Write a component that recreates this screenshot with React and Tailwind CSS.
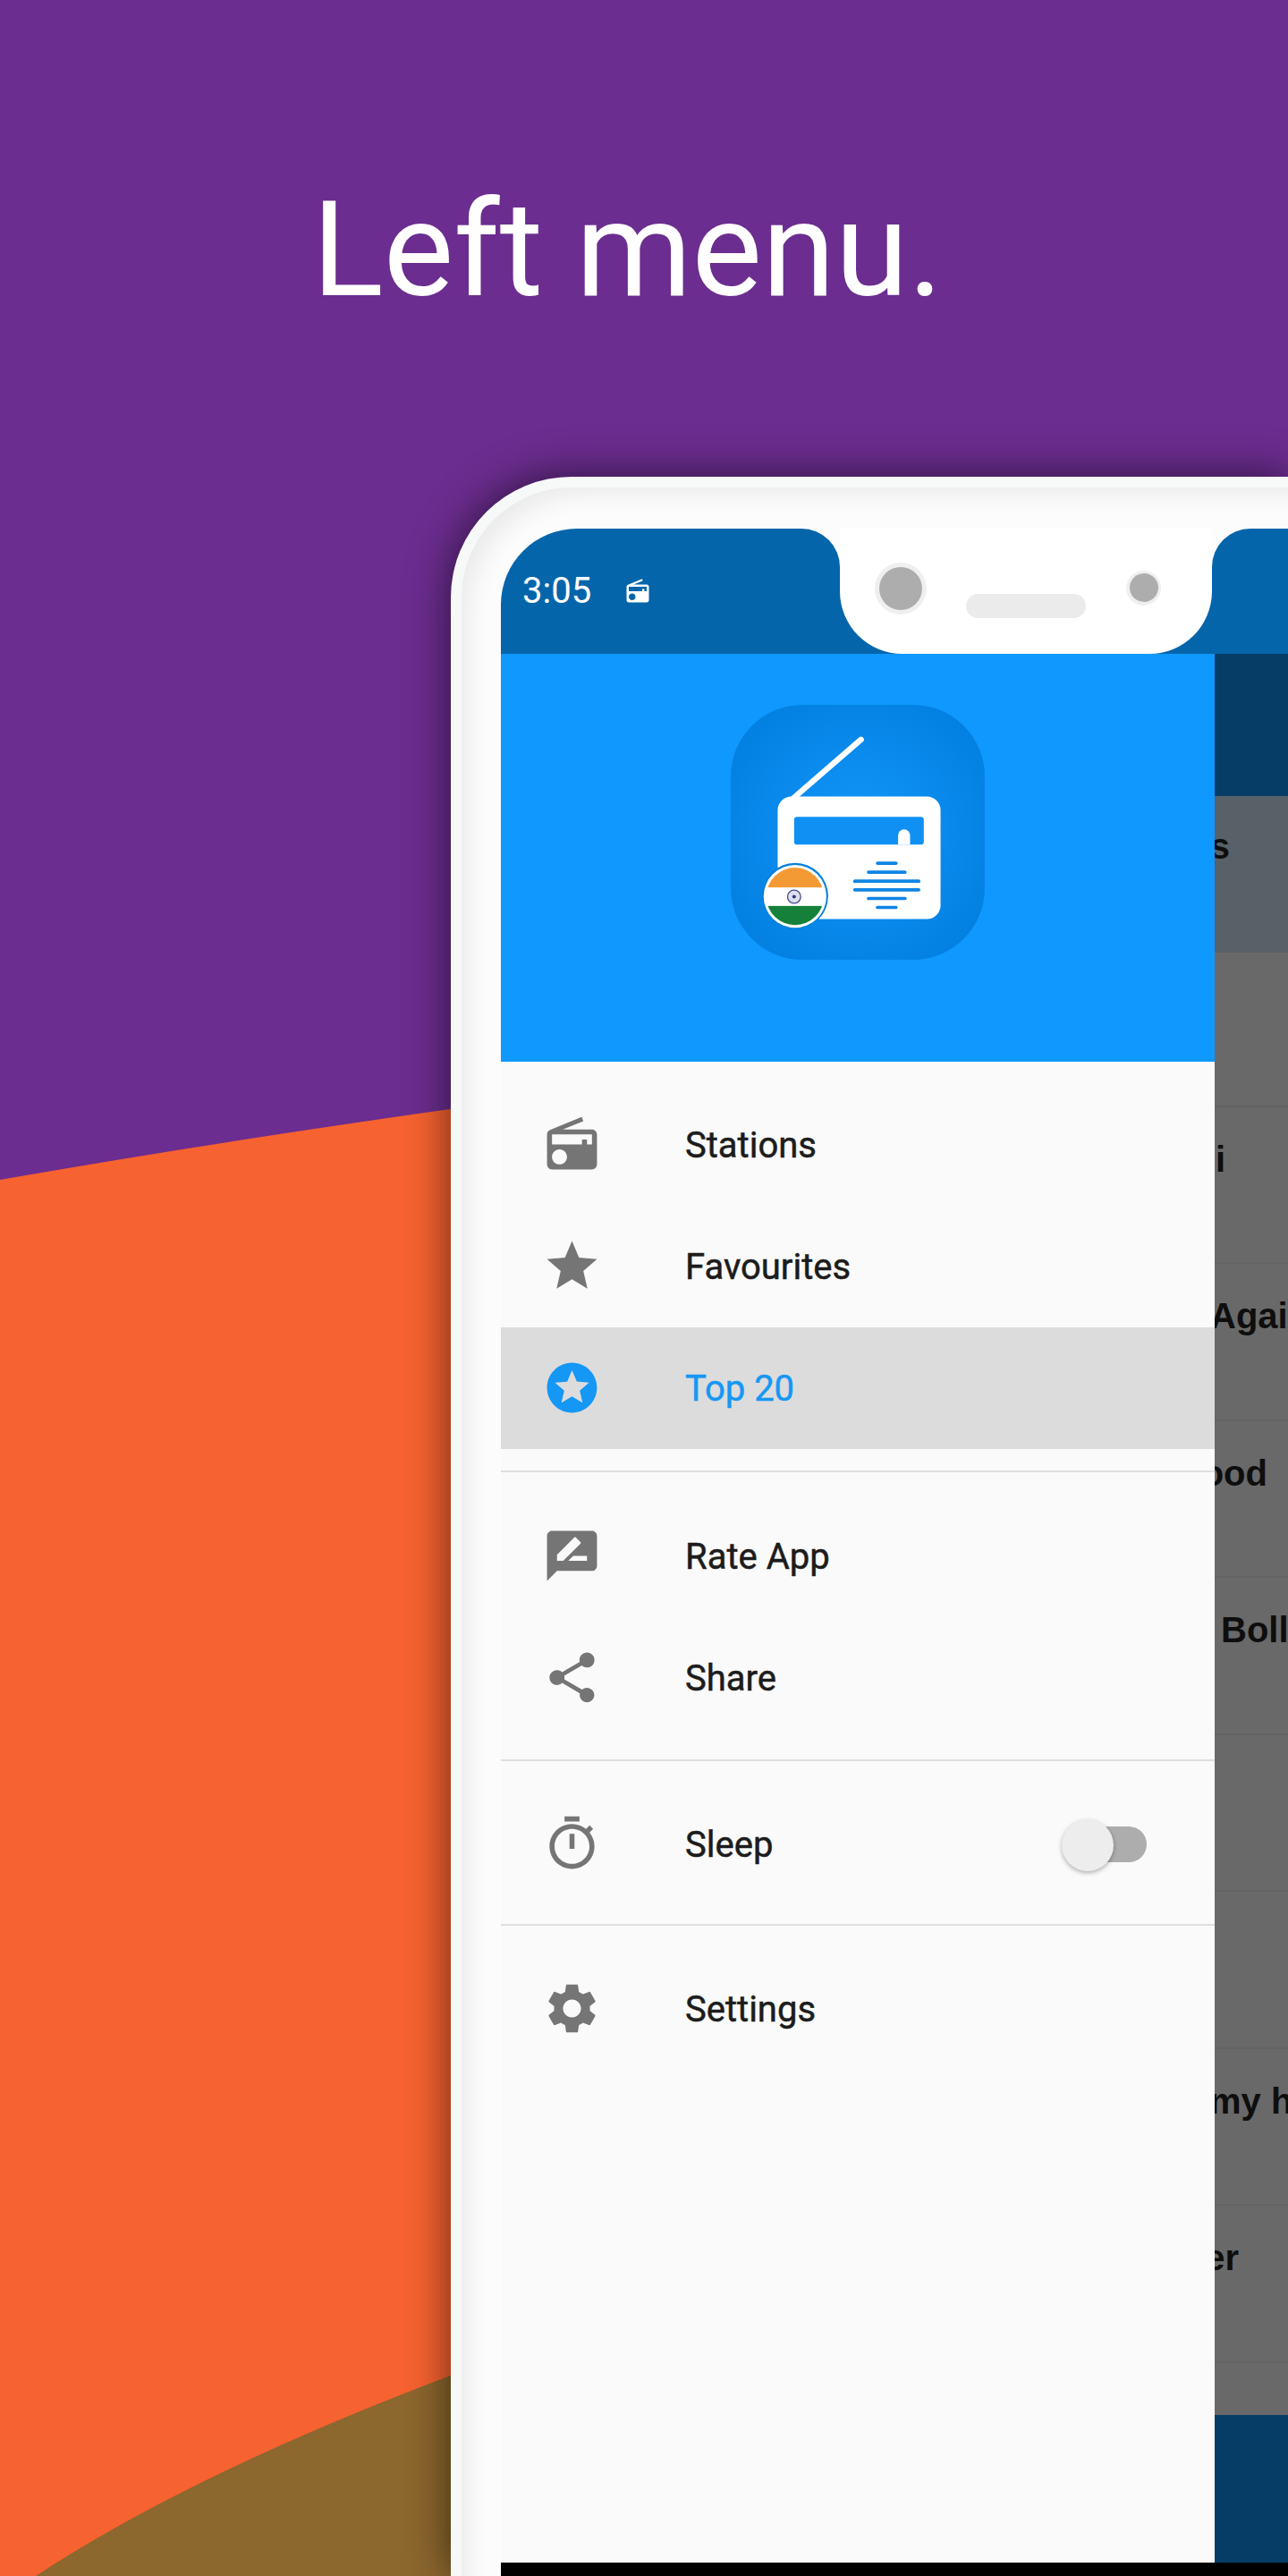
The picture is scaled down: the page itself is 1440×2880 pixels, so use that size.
import React from 'react';

const PATHS = {
  radio: 'M3.24 6.15C2.51 6.43 2 7.17 2 8v12c0 1.1.89 2 2 2h16c1.11 0 2-.9 2-2V8c0-1.11-.89-2-2-2H8.3l8.26-3.34L15.88 1 3.24 6.15zM7 20c-1.66 0-3-1.34-3-3s1.34-3 3-3 3 1.34 3 3-1.34 3-3 3zm13-8h-2v-2h-2v2H4V8h16v4z',
  star: 'M12 17.27L18.18 21l-1.64-7.03L22 9.24l-7.19-.61L12 2 9.19 8.63 2 9.24l5.46 4.73L5.82 21z',
  stars: 'M11.99 2C6.47 2 2 6.48 2 12s4.47 10 9.99 10C17.52 22 22 17.52 22 12S17.52 2 11.99 2zm4.24 16L12 15.45 7.77 18l1.12-4.81-3.73-3.23 4.92-.42L12 5l1.92 4.53 4.92.42-3.73 3.23L16.23 18z',
  rate: 'M20 2H4c-1.1 0-2 .9-2 2v18l4-4h14c1.1 0 2-.9 2-2V4c0-1.1-.9-2-2-2zM6 14v-2.47l6.88-6.88c.2-.2.51-.2.71 0l1.77 1.77c.2.2.2.51 0 .71L8.47 14H6zm12 0h-7.5l2-2H18v2z',
  share: 'M18 16.08c-.76 0-1.44.3-1.96.77L8.91 12.7c.05-.23.09-.46.09-.7s-.04-.47-.09-.7l7.05-4.11c.54.5 1.25.81 2.04.81 1.66 0 3-1.34 3-3s-1.34-3-3-3-3 1.34-3 3c0 .24.04.47.09.7L8.04 9.81C7.5 9.31 6.79 9 6 9c-1.66 0-3 1.34-3 3s1.34 3 3 3c.79 0 1.5-.31 2.04-.81l7.12 4.16c-.05.21-.08.43-.08.65 0 1.61 1.31 2.92 2.92 2.92 1.61 0 2.92-1.31 2.92-2.92s-1.31-2.92-2.92-2.92z',
  timer: 'M15 1H9v2h6V1zm-4 13h2V8h-2v6zm8.03-6.61l1.42-1.42c-.43-.51-.9-.99-1.41-1.41l-1.42 1.42C16.07 4.74 14.12 4 12 4c-4.97 0-9 4.03-9 9s4.02 9 9 9 9-4.03 9-9c0-2.12-.74-4.07-1.97-5.61zM12 20c-3.87 0-7-3.13-7-7s3.13-7 7-7 7 3.13 7 7-3.13 7-7 7z',
  settings: 'M19.14 12.94c.04-.3.06-.61.06-.94 0-.32-.02-.64-.07-.94l2.03-1.58c.18-.14.23-.41.12-.61l-1.92-3.32c-.12-.22-.37-.29-.59-.22l-2.39.96c-.5-.38-1.03-.7-1.62-.94l-.36-2.54c-.04-.24-.24-.41-.48-.41h-3.84c-.24 0-.43.17-.47.41l-.36 2.54c-.59.24-1.13.57-1.62.94l-2.39-.96c-.22-.08-.47 0-.59.22L2.74 8.87c-.12.21-.08.47.12.61l2.03 1.58c-.05.3-.09.63-.09.94s.02.64.07.94l-2.03 1.58c-.18.14-.23.41-.12.61l1.92 3.32c.12.22.37.29.59.22l2.39-.96c.5.38 1.03.7 1.62.94l.36 2.54c.05.24.24.41.48.41h3.84c.24 0 .44-.17.47-.41l.36-2.54c.59-.24 1.13-.56 1.62-.94l2.39.96c.22.08.47 0 .59-.22l1.92-3.32c.12-.22.07-.47-.12-.61l-2.01-1.58zM12 15.6c-1.98 0-3.6-1.62-3.6-3.6s1.62-3.6 3.6-3.6 3.6 1.62 3.6 3.6-1.62 3.6-3.6 3.6z',
};

const Icon = ({ name, className }) => (
  <svg viewBox="0 0 24 24" className={className} fill="currentColor">
    <path d={PATHS[name]} />
  </svg>
);

const MenuRow = ({ icon, label, active, children }) => (
  <div className={`relative flex h-[136px] items-center pl-[46px] ${active ? 'bg-[#dcdcdc] text-[#1597f5]' : 'text-[#1c1c1c]'}`}>
    <Icon name={icon} className={`h-[67px] w-[67px] ${active ? 'text-[#1597f5]' : 'text-[#757575]'}`} />
    <span className="ml-[93px] mt-[3px] text-[40px] font-normal leading-none [-webkit-text-stroke:0.5px_currentColor]">{label}</span>
    {children}
  </div>
);

const AppLogo = () => (
  <svg viewBox="110 85 850 853" className="h-[285px] w-[284px]">
    <defs>
      <radialGradient id="logoBg" cx="50%" cy="50%" r="62%">
        <stop offset="0%" stopColor="#1296fa" />
        <stop offset="100%" stopColor="#027fe0" />
      </radialGradient>
      <clipPath id="flagClip">
        <circle cx="325" cy="726" r="96" />
      </clipPath>
    </defs>
    <rect x="110" y="85" width="850" height="853" rx="240" fill="url(#logoBg)" />
    <line x1="322" y1="395" x2="546" y2="201" stroke="#fff" strokeWidth="19" strokeLinecap="round" />
    <rect x="267" y="392" width="545" height="410" rx="46" fill="#fff" />
    <rect x="322" y="460" width="434" height="93" rx="10" fill="#1090f2" />
    <path d="M670 553V522a20 20 0 0 1 40 0V553z" fill="#fff" />
    <g stroke="#0f84e4" strokeWidth="11" strokeLinecap="round">
      <line x1="601" y1="615" x2="663" y2="615" />
      <line x1="571" y1="645" x2="693" y2="645" />
      <line x1="525" y1="675" x2="739" y2="675" />
      <line x1="525" y1="704" x2="739" y2="704" />
      <line x1="571" y1="733" x2="693" y2="733" />
      <line x1="601" y1="763" x2="663" y2="763" />
    </g>
    <circle cx="325" cy="725" r="111" fill="#0580dc" />
    <circle cx="325" cy="726" r="105" fill="#fff" />
    <g clipPath="url(#flagClip)">
      <rect x="220" y="625" width="210" height="71" fill="#f39a35" />
      <rect x="220" y="758" width="210" height="70" fill="#15803a" />
    </g>
    <circle cx="322" cy="727" r="22" fill="#dfe0ee" stroke="#4a4f8c" strokeWidth="4" />
    <circle cx="322" cy="727" r="6" fill="#333a80" />
  </svg>
);

// what the drawer leaves visible of the dimmed list behind it
const DimRow = ({ text, className = '' }) => (
  <div className={`flex h-[175.5px] overflow-hidden whitespace-nowrap border-b-2 border-[#636363] pt-[30px] font-['Liberation_Sans',sans-serif] text-[40px] font-bold leading-[56px] text-[#0e0e0e] ${className}`}>
    <span>{text}</span>
  </div>
);

export default function App() {
  return (
    <div className="relative h-[2880px] w-[1440px] overflow-hidden bg-[#6b2d8f] font-['Roboto',sans-serif]">
      <svg viewBox="0 0 1440 2880" className="absolute inset-0 h-full w-full">
        <path d="M0 1319Q250 1275 560 1232V2880H0z" fill="#f66230" />
        <path d="M40 2880Q230 2755 560 2635V2880z" fill="#8c672e" />
      </svg>

      <div className="relative h-[533px] pl-[349px] pt-[180px]">
        <h1 className="text-[148px] font-normal leading-[200px] text-white">Left menu.</h1>
      </div>

      <div className="relative ml-[504px] h-[2347px] rounded-tl-[135px] bg-[#f7f8f8] pl-3 pt-3 shadow-[0_0_48px_rgba(0,0,0,0.6)]">
        <div className="h-full rounded-tl-[123px] bg-[#fcfcfc] pl-[44px] pt-[45.5px] shadow-[inset_18px_18px_26px_-10px_rgba(0,0,0,0.07)]">
          <div className="flex h-[140px]">
            <div className="flex w-[379px] items-center rounded-tl-[85px] rounded-tr-[43px] bg-[#0565ab] pl-6 text-white">
              <span className="text-[40px] leading-none">3:05</span>
              <Icon name="radio" className="ml-[37px] h-[30px] w-[30px]" />
            </div>
            <div className="w-[416px] bg-[linear-gradient(#fff_50%,#0565ab_50%)]">
              <div className="relative flex h-full items-start rounded-b-[70px] bg-white">
                <div className="ml-[39px] mt-[38px] flex h-[58px] w-[58px] items-center justify-center rounded-full bg-[#efefef]">
                  <div className="h-[48px] w-[48px] rounded-full bg-[#adadad]" />
                </div>
                <div className="ml-[44px] mt-[73px] h-[27px] w-[134px] rounded-full bg-[#ebebeb]" />
                <div className="ml-[45px] mt-[47px] flex h-[39px] w-[39px] items-center justify-center rounded-full bg-[#efefef]">
                  <div className="h-[32px] w-[32px] rounded-full bg-[#adadad]" />
                </div>
              </div>
            </div>
            <div className="flex-1 rounded-tl-[43px] bg-[#0565ab]" />
          </div>

          <div className="flex h-[2134px]">
            <div className="flex w-[798px] flex-col bg-[#fafafa]">
              <div className="flex h-[456px] justify-center bg-[#0f98fe] pt-[57px]">
                <AppLogo />
              </div>
              <div className="border-b-2 border-[#dedede] pb-[24px] pt-[25px]">
                <MenuRow icon="radio" label="Stations" />
                <MenuRow icon="star" label="Favourites" />
                <MenuRow icon="stars" label="Top 20" active />
              </div>
              <div className="border-b-2 border-[#dedede] pb-[23px] pt-[26px]">
                <MenuRow icon="rate" label="Rate App" />
                <MenuRow icon="share" label="Share" />
              </div>
              <div className="border-b-2 border-[#dedede] pb-[21px] pt-[25px]">
                <MenuRow icon="timer" label="Sleep">
                  <div className="absolute left-[633px] top-[48px] h-[40px] w-[89px] rounded-full bg-[#adadad]" />
                  <div className="absolute left-[627px] top-[40px] h-[58px] w-[58px] rounded-full bg-[#ededed] shadow-[0_2px_5px_rgba(0,0,0,0.3)]" />
                </MenuRow>
              </div>
              <div className="pt-[25px]">
                <MenuRow icon="settings" label="Settings" />
              </div>
            </div>

            <div className="flex flex-1 flex-col overflow-hidden bg-[#696969]">
              <div className="h-[159px] bg-[#053d66]" />
              <div className="flex h-[175px] justify-end overflow-hidden whitespace-nowrap bg-[#596168] pr-[65px] pt-[28px] font-['Liberation_Sans',sans-serif] text-[40px] font-bold leading-[56px] text-[#0e0e0e]">
                <span>Stations</span>
              </div>
              <div className="h-[173px] border-b-2 border-[#636363]" />
              <DimRow text="Hindi" className="justify-end pr-[70px]" />
              <DimRow text="Again" className="[text-indent:-5px]" />
              <DimRow text="Bollywood" className="justify-end pr-[23px]" />
              <DimRow text="Bollywood" className="pl-[7px]" />
              <DimRow text="" />
              <DimRow text="" />
              <DimRow text="my heart" className="[text-indent:-6px]" />
              <DimRow text="Super" className="justify-end pr-[55px]" />
              <div className="flex-1 bg-[#696969]" />
              <div className="h-[165px] bg-[#053d66]" />
            </div>
          </div>
          <div className="h-[15px] bg-black" />
        </div>
      </div>
    </div>
  );
}
